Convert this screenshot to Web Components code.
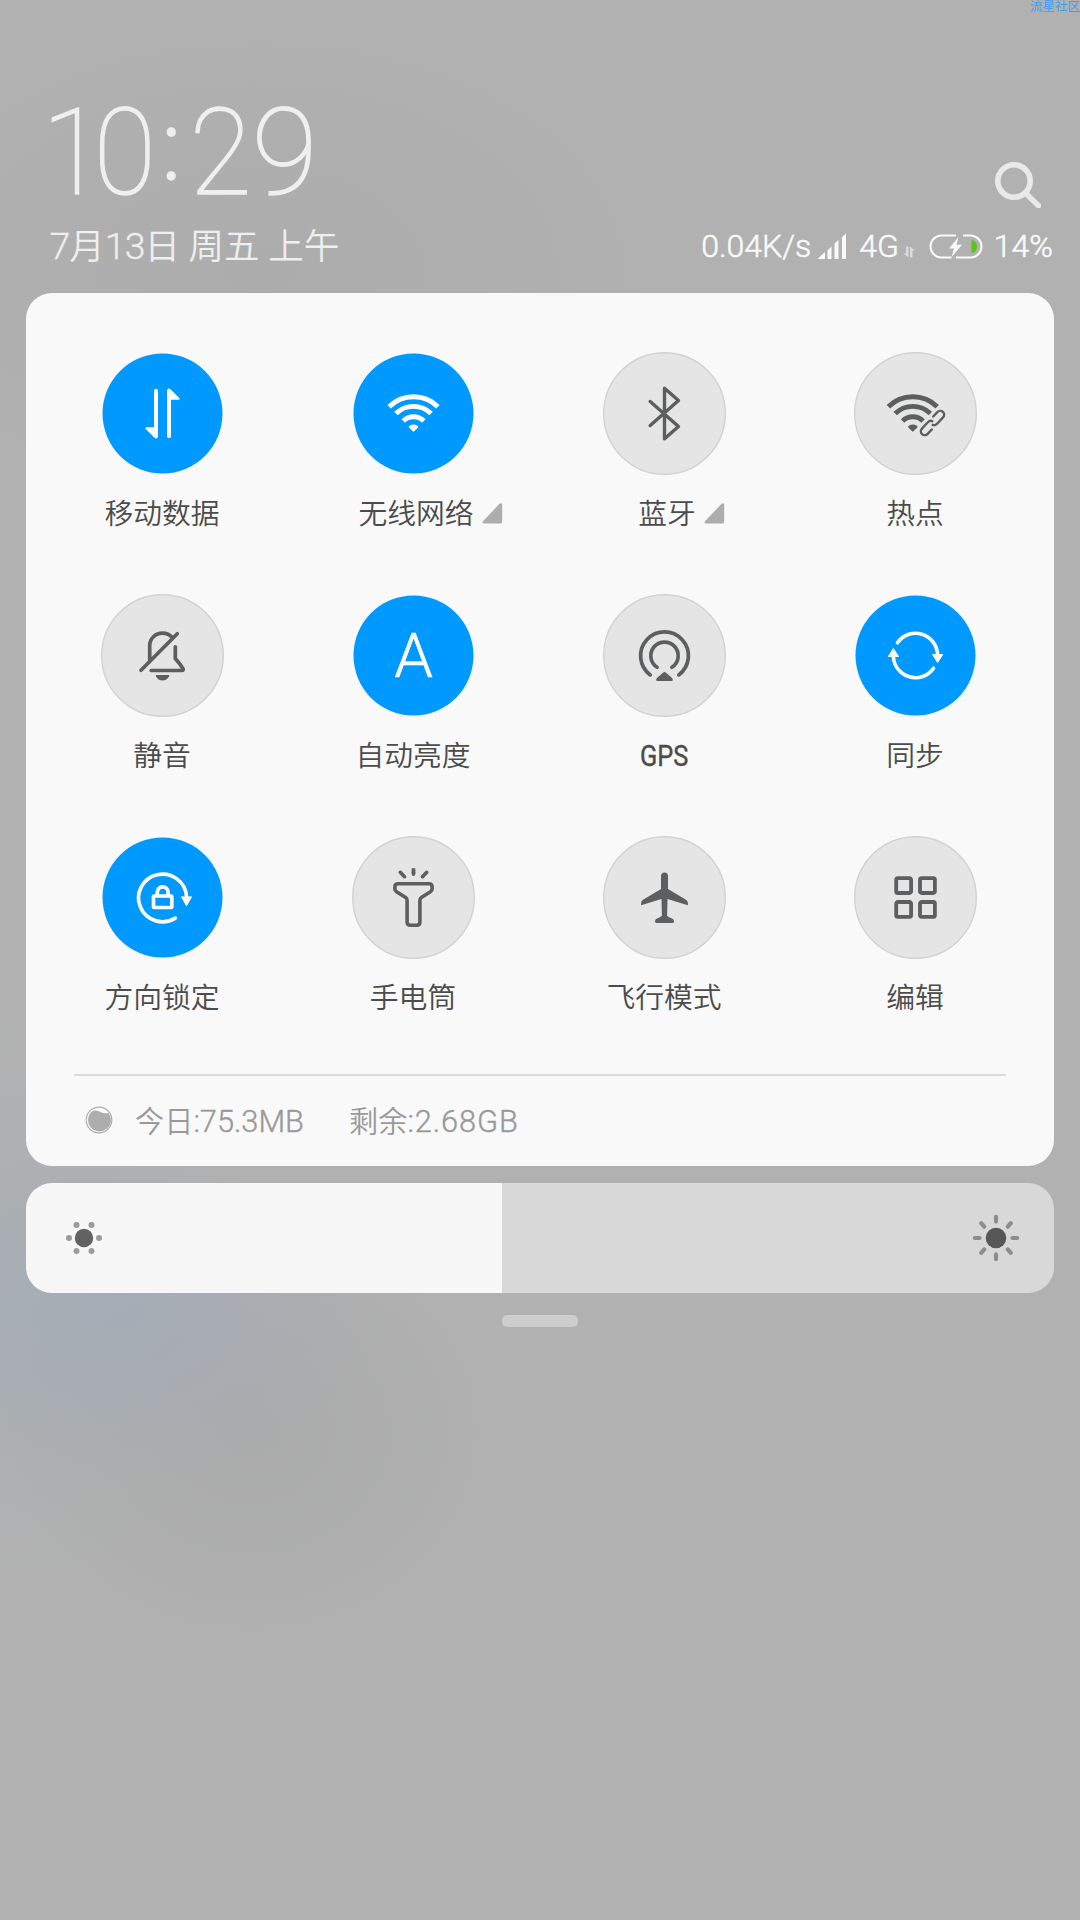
<!DOCTYPE html>
<html lang="zh-CN">
<head>
<meta charset="utf-8">
<title>控制中心</title>
<style>
html, body { margin: 0; padding: 0; }
body { width: 1080px; height: 1920px; overflow: hidden; background: #b1b1b1; font-family: Roboto, "Noto Sans CJK SC", sans-serif; }
</style>
</head>
<body>
<control-center></control-center>
<script>
const define = (name, html, setup) => {
  const t = document.createElement('template');
  t.innerHTML = html;
  customElements.define(name, class extends HTMLElement {
    constructor() {
      super();
      this.attachShadow({ mode: 'open' }).append(t.content.cloneNode(true));
    }
    connectedCallback() { if (setup) setup(this, this.shadowRoot); }
  });
};

const wifi = `<g fill="none" stroke="currentColor" stroke-width="4.9">
  <path d="M-24.4 -6.8A34.8 34.8 0 0 1 24.4 -6.8"/><path d="M-17.6 0A25.2 25.2 0 0 1 17.6 0"/><path d="M-10.3 7.4A14.8 14.8 0 0 1 10.3 7.4"/></g>
  <path fill="currentColor" d="M-.7 17.8L-4.5 14Q-5.2 13 -4 12.3Q0 9.9 4 12.3Q5.2 13 4.5 14L.7 17.8Q0 18.5 -.7 17.8Z"/>`;
const line = (w, body) => `<g fill="none" stroke="currentColor" stroke-width="${w}" stroke-linecap="round" stroke-linejoin="round">${body}</g>`;
const halfArrow = 'M-4.5 -22.8V22.8A2 2 0 0 1 -8 24.2L-16.8 15.5Q-18 13.9 -16 13.7H-8.5V-22.8A2 2 0 0 1 -4.5 -22.8Z';
const syncHalf = `<path fill="none" stroke="currentColor" stroke-width="3.6" stroke-linecap="round" d="M-18 -12.7A22 22 0 0 1 22.1 -1"/><path fill="currentColor" stroke="currentColor" stroke-linejoin="round" d="M17 -1H27.2L22.1 7Z"/>`;
const chain = '<path d="M5.2 -3.9H11.3A3.9 3.9 0 0 1 11.3 3.9H3Q-.4 3.9 -1.2 1.4"/>';

const ICONS = {
  data: `<g fill="currentColor"><path d="${halfArrow}"/><path transform="rotate(180)" d="${halfArrow}"/></g>`,
  wifi,
  bluetooth: line(3.4, '<path d="M-14.3 -12L14 13L0 25.3V-25.3L14 -13L-14.3 12"/>'),
  hotspot: `<g transform="translate(-2.7 0)">${wifi}</g><g transform="translate(17 9.5) rotate(-47)">${line(2.4, `${chain}<g transform="rotate(180)">${chain}</g>`)}</g>`,
  mute: line(3.7, '<path d="M-21.5 14.8L14.8 -21.7M-12.8 5V-10A12.8 12.5 0 0 1 0 -22.4Q6 -22.4 10 -17.7M12.8 -8.7V3Q18 9 20.6 13.2Q21.1 14.9 19.5 15H-11.3"/>') + '<path fill="currentColor" d="M-6 19.5H6Q7.2 19.5 6.6 20.8Q4.5 25 0 25T-6.6 20.8Q-7.2 19.5 -6 19.5Z"/>',
  auto: '<text x="0" y="21.8" text-anchor="middle" font-family="Roboto, sans-serif" font-weight="300" font-size="62" fill="currentColor" stroke="currentColor" stroke-width=".5" stroke-linejoin="round">A</text>',
  gps: line(3.7, '<path d="M-14.3 19.4A23.9 23.9 0 1 1 14.3 19.4M-7.4 11.8A13.7 13.7 0 1 1 7.4 11.8"/>') + '<path fill="currentColor" d="M-1.2 17Q0 16 1.2 17L7.6 22.6Q9.3 25.5 7 25.5H-7Q-9.3 25.5 -7.6 22.6Z"/>',
  sync: `${syncHalf}<g transform="rotate(180)">${syncHalf}</g>`,
  rotation: line(3.7, '<path d="M24 -1A24 23.8 0 1 0 12.8 20.6"/><rect x="-9" y="-1.5" width="18.3" height="11.5" rx=".6"/><path d="M-5.2 -2V-5.3A5.4 5.4 0 0 1 5.6 -5.3V-2"/>') + '<path fill="currentColor" stroke="currentColor" stroke-linejoin="round" d="M19 -.6H29L24 8.2Z"/>',
  torch: line(3.6, '<path d="M-15.5 -13.8H15.5Q18.6 -13.8 18.6 -10.8V-8.5Q18.6 -6.8 17 -5.8L7.8 0Q6.4 1 6.4 3V24.5Q6.4 27.7 3.3 27.7H-3.3Q-6.4 27.7 -6.4 24.5V3Q-6.4 1 -7.8 0L-17 -5.8Q-18.6 -6.8 -18.6 -8.5V-10.8Q-18.6 -13.8 -15.5 -13.8ZM-13.2 -25.2L-9 -20.8M13.2 -25.2L9 -20.8M0 -23.2V-25.5"/>') + '<path stroke="currentColor" stroke-width="3.7" d="M0 -29.3V-24"/>',
  plane: '<path fill="currentColor" d="M-3.5 -21.5A3.5 3.5 0 0 1 3.5 -21.5V-8.5L21.5 2.2Q23.4 3.5 23.4 5.5V7.8L3 1.6L2.6 18.2Q4 19.7 8 21.2Q9.5 22 9.5 24Q9.5 25.4 8 25.4H-8Q-9.5 25.4 -9.5 24Q-9.5 22 -8 21.2Q-4 19.7 -2.6 18.2L-3 1.6L-23.4 7.8V5.5Q-23.4 3.5 -21.5 2.2L-3.5 -8.5Z"/>',
  edit: line(3.8, [[-19.3, -19.4], [4.5, -19.4], [-19.3, 4.5], [4.5, 4.5]].map(([x, y]) => `<rect x="${x}" y="${y}" width="14.9" height="14.9" rx="1.6"/>`).join('')),
};

define('qs-tile', `
<style>
:host { display: flex; flex-direction: column; align-items: center; height: 242px; color: #5c5e5f; }
.disc { display: block; width: 123px; height: 123px; flex: none; }
.disc circle { r: 60.8px; fill: #e5e5e5; stroke: #d2d2d2; stroke-width: 1.4px; }
:host([on]) { color: #fff; }
:host([on]) .disc circle { r: 60px; fill: #09f; stroke: none; }
.label { position: relative; left: -.5px; margin-top: 19px; font-size: 28.8px; line-height: 40px; height: 40px; color: #4b4b4b; white-space: nowrap; font-weight: 350; }
:host([more]) .label { left: 2.5px; }
:host([narrow]) .text { display: inline-block; transform: scaleX(.86); font-weight: 400; font-size: 29.5px; -webkit-text-stroke: .4px #4b4b4b; }
.more { display: none; position: absolute; left: calc(100% + 8px); top: 9px; width: 21px; height: 21px; }
:host([more]) .more { display: block; }
</style>
<svg class="disc" viewBox="-61.5 -61.5 123 123"><circle/><g></g></svg>
<div class="label"><span class="text"><slot></slot></span><svg class="more" viewBox="0 0 21 21"><path fill="#adadad" d="M17.5 .8Q20.2 -.6 20.2 2V19Q20.2 20.4 18.8 20.4H1.8Q-.6 20.4 1 18.2Z"/></svg></div>`,
(el, root) => { root.querySelector('g').innerHTML = ICONS[el.getAttribute('icon')]; });

define('status-header', `
<style>
:host { display: flex; justify-content: space-between; height: 293px; box-sizing: border-box; padding: 83px 27px 0 48px; color: #efefef; }
.left, .right { display: flex; flex-direction: column; }
.right { align-items: flex-end; }
.clock { font-size: 120px; line-height: 140px; height: 138px; font-weight: 100; white-space: nowrap; margin-left: -6px; transform: scaleX(.945); transform-origin: 0 0; -webkit-text-stroke: 1.5px #efefef; }
.clock .a { letter-spacing: -11px; }
.clock .b { letter-spacing: 6px; }
.clock .c { position: relative; top: -14px; font-size: 99px; line-height: 1; font-weight: 300; letter-spacing: 9px; }
.clock .d { letter-spacing: 0; }
.clock .e { display: inline-block; line-height: 1; transform: scaleX(1.06); transform-origin: 0 0; }
.date { font-size: 35.5px; line-height: 50px; font-weight: 350; white-space: nowrap; margin-left: 1.5px; }
.date b { font-weight: 300; font-size: 37.5px; letter-spacing: -1px; -webkit-text-stroke: .3px #efefef; }
.search { width: 48px; height: 48px; margin: 77px 12px 0 0; }
.status { display: flex; align-items: center; height: 40px; margin-top: 18px; font-size: 32px; line-height: 40px; font-weight: 300; -webkit-text-stroke: .5px #fafafa; color: #fafafa; white-space: nowrap; }
svg { display: block; flex: none; }
</style>
<div class="left">
  <div class="clock"><span class="a">1</span><span class="b">0</span><span class="c">:</span><span class="d">2</span><span class="e">9</span></div>
  <div class="date"><b>7</b>月<b>13</b>日 周五 上午</div>
</div>
<div class="right">
  <svg class="search" viewBox="0 0 48 48" fill="none" stroke="#e9e9e9" stroke-linecap="round"><circle cx="21" cy="21" r="16.2" stroke-width="5.6"/><path stroke-width="5.4" d="M33.5 34L45.5 45.8"/></svg>
  <div class="status">
    <span>0.04K/s</span>
    <svg style="margin-left:6px" width="30" height="27" viewBox="0 0 30 27" fill="#fafafa"><path d="M.5 26L8 19V26ZM10.5 17.5L14.5 13.5V26H10.5ZM17.5 10.5L21.5 7V26H17.5ZM25 4L29 .5V26H25Z"/></svg>
    <span style="margin-left:12px">4G</span>
    <svg style="margin:11px 0 0 4px" width="12" height="12" viewBox="0 0 12 12" fill="#dcdcdc"><path d="M3 .5H5.5V11.5L.5 7.5H3ZM7 11.5H9.5V4.5H12L7 .5Z"/></svg>
    <svg style="margin-left:14px" width="54" height="25" viewBox="0 0 54 25" fill="none" stroke="#fafafa" stroke-width="2"><path d="M22.5 23.5H12.5A11 11 0 0 1 12.5 1.5H27M34 1.5H41.5A11 11 0 0 1 41.5 23.5H27"/><path fill="#fafafa" stroke="none" d="M29.5 3L20 14.5H25L22.5 23L33 10.8H27.6Z"/><path fill="#5bc41b" stroke="none" d="M42.5 6.2C50 6.5 50 18.5 42.5 18.8Z"/></svg>
    <span style="margin-left:11px">14%</span>
  </div>
</div>`);

define('data-usage', `
<style>
:host { display: flex; align-items: center; height: 90px; margin: 0 48px; padding-left: 11px; border-top: 2px solid #dadada; color: #999; font-size: 29.2px; font-weight: 350; white-space: nowrap; box-sizing: border-box; }
svg { margin-right: 22px; flex: none; }
.gap { width: 45px; }
::slotted(span) { position: relative; top: -1px; }
</style>
<svg width="28" height="28" viewBox="0 0 28 28"><circle cx="14" cy="14" r="12.8" fill="none" stroke="#adadad" stroke-width="1.2"/><path fill="#adadad" d="M7.5 5Q11 3.5 15.5 6Q19 7.8 23.5 7A11.4 11.4 0 1 1 7.5 5Z"/></svg>
<slot name="today"></slot><span class="gap"></span><slot name="left"></slot>`);

define('quick-panel', `
<style>
:host { display: flex; flex-direction: column; box-sizing: border-box; height: 873px; margin: 0 26px; border-radius: 26px; background: #f9f9f9; }
.grid { display: grid; grid-template-columns: repeat(4, 251px); grid-auto-rows: 242px; padding: 59px 13px 0 11px; height: 722px; }
</style>
<div class="grid"><slot></slot></div>
<slot name="footer"></slot>`);

define('brightness-slider', `
<style>
:host { display: flex; align-items: center; justify-content: space-between; box-sizing: border-box; height: 110px; margin: 17px 26px 0; padding: 0 32px; border-radius: 26px; background: linear-gradient(90deg, #f7f7f7 476px, #d8d8d8 476px); }
</style>
<svg width="52" height="52" viewBox="-26 -26 52 52"><circle r="9.2" fill="#626262"/><g fill="#9c9c9c"><circle cx="-15" r="3"/><circle cx="15" r="3"/><circle cx="-7.5" cy="-13" r="3"/><circle cx="7.5" cy="-13" r="3"/><circle cx="-7.5" cy="13" r="3"/><circle cx="7.5" cy="13" r="3"/></g></svg>
<svg width="52" height="52" viewBox="-26 -26 52 52"><circle r="10.3" fill="#575757"/><path stroke="#8d8d8d" stroke-width="4.1" stroke-linecap="round" d="M16.4 0H21.2M-16.4 0H-21.2M0 16.4V21.2M0 -16.4V-21.2M11.8 11.3L14.8 14.8M-11.8 11.3L-14.8 14.8M11.8 -11.3L14.8 -14.8M-11.8 -11.3L-14.8 -14.8"/></svg>`);

define('control-center', `
<style>
:host { display: block; position: relative; width: 1080px; height: 1920px; overflow: hidden;
  background:
    radial-gradient(ellipse 260px 170px at 120px 1315px, rgba(160,170,186,.6), rgba(160,170,186,0)),
    radial-gradient(ellipse 240px 280px at 0 1300px, rgba(163,174,178,.45), rgba(163,174,178,0)),
    radial-gradient(ellipse 250px 220px at 250px 1430px, rgba(165,166,166,.6), rgba(165,166,166,0)),
    radial-gradient(ellipse 420px 260px at 260px 270px, rgba(169,169,169,.6), rgba(169,169,169,0)),
    #b1b1b1; }
.mark { position: absolute; top: 0; right: 0; font-size: 12.5px; line-height: 12px; white-space: nowrap; color: #3a9ff5; font-family: "Noto Sans CJK SC", sans-serif; }
.handle { width: 76px; height: 11.5px; margin: 22px auto 0; border-radius: 5px; background: #cdcdcd; }
data-usage b { font-weight: 300; font-size: 30.8px; -webkit-text-stroke: .4px #999; }
data-usage [slot="left"] b { letter-spacing: .9px; }
</style>
<status-header></status-header>
<quick-panel>
  <qs-tile icon="data" on>移动数据</qs-tile>
  <qs-tile icon="wifi" on more>无线网络</qs-tile>
  <qs-tile icon="bluetooth" more>蓝牙</qs-tile>
  <qs-tile icon="hotspot">热点</qs-tile>
  <qs-tile icon="mute">静音</qs-tile>
  <qs-tile icon="auto" on>自动亮度</qs-tile>
  <qs-tile icon="gps" narrow>GPS</qs-tile>
  <qs-tile icon="sync" on>同步</qs-tile>
  <qs-tile icon="rotation" on>方向锁定</qs-tile>
  <qs-tile icon="torch">手电筒</qs-tile>
  <qs-tile icon="plane">飞行模式</qs-tile>
  <qs-tile icon="edit">编辑</qs-tile>
  <data-usage slot="footer"><span slot="today">今日<b>:75.3MB</b></span><span slot="left">剩余<b>:2.68GB</b></span></data-usage>
</quick-panel>
<brightness-slider></brightness-slider>
<div class="handle"></div>
<div class="mark">流星社区</div>`);
</script>
</body>
</html>
